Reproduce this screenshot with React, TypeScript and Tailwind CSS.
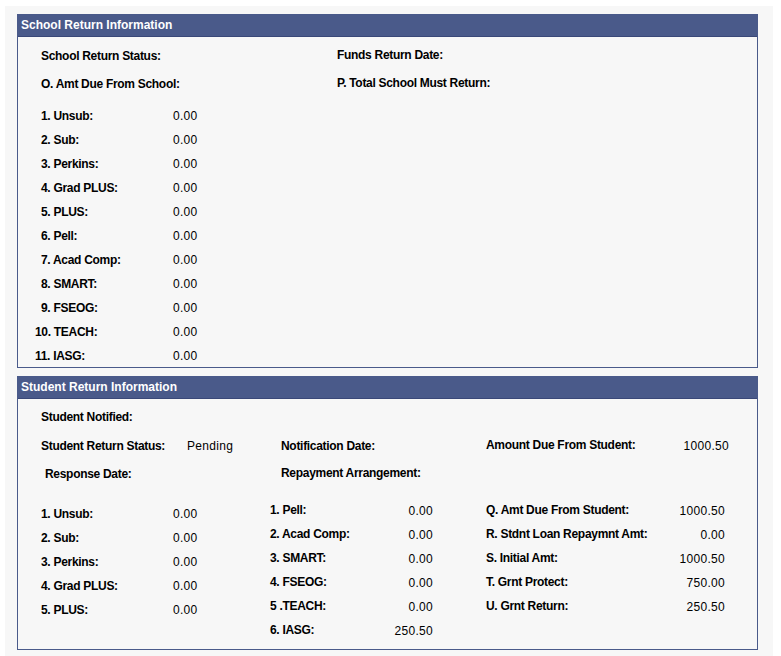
const font = { fontFamily: '"Liberation Sans", Arial, sans-serif' };

const schoolRows = [
  { label: "1. Unsub:", value: "0.00" },
  { label: "2. Sub:", value: "0.00" },
  { label: "3. Perkins:", value: "0.00" },
  { label: "4. Grad PLUS:", value: "0.00" },
  { label: "5. PLUS:", value: "0.00" },
  { label: "6. Pell:", value: "0.00" },
  { label: "7. Acad Comp:", value: "0.00" },
  { label: "8. SMART:", value: "0.00" },
  { label: "9. FSEOG:", value: "0.00" },
  { label: "10. TEACH:", value: "0.00", wide: true },
  { label: "11. IASG:", value: "0.00", wide: true },
];

const loanRows = [
  { label: "1. Unsub:", value: "0.00" },
  { label: "2. Sub:", value: "0.00" },
  { label: "3. Perkins:", value: "0.00" },
  { label: "4. Grad PLUS:", value: "0.00" },
  { label: "5. PLUS:", value: "0.00" },
];

const grantRows = [
  { label: "1. Pell:", value: "0.00" },
  { label: "2. Acad Comp:", value: "0.00" },
  { label: "3. SMART:", value: "0.00" },
  { label: "4. FSEOG:", value: "0.00" },
  { label: "5 .TEACH:", value: "0.00" },
  { label: "6. IASG:", value: "250.50" },
];

const totalRows = [
  { label: "Q. Amt Due From Student:", value: "1000.50" },
  { label: "R. Stdnt Loan Repaymnt Amt:", value: "0.00" },
  { label: "S. Initial Amt:", value: "1000.50" },
  { label: "T. Grnt Protect:", value: "750.00" },
  { label: "U. Grnt Return:", value: "250.50" },
];

function Label({ children }: { children: React.ReactNode }) {
  return (
    <span className="text-[12px] font-bold tracking-[-0.3px] text-black whitespace-nowrap">{children}</span>
  );
}

function Value({ children }: { children: React.ReactNode }) {
  return <span className="pt-[2px] text-[12px] tracking-[0.3px] text-black whitespace-nowrap">{children}</span>;
}

function Panel({ title, children }: { title: string; children: React.ReactNode }) {
  return (
    <section className="w-[741px] border border-[#4a5a8a] bg-[#f7f7f7]">
      <div className="h-[22px] border-b border-[#3a4878] bg-[#4a5a8a] pl-[3px] text-[12px] font-bold leading-[21px] text-white">
        {title}
      </div>
      {children}
    </section>
  );
}

export default function App() {
  return (
    <div className="min-h-screen bg-white pl-[5px] pt-[6px]" style={font}>
      <div className="min-h-[650px] w-[768px] bg-[#f7f7f7] pl-[12px] pt-[8px]">
        <Panel title="School Return Information">
          <div className="pl-[23px]">
            <div className="mt-[6px] flex h-[24px] items-center">
              <div className="w-[296px]">
                <Label>School Return Status:</Label>
              </div>
              <Label>Funds Return Date:</Label>
            </div>
            <div className="mt-[4px] flex h-[24px] items-center">
              <div className="w-[296px]">
                <Label>O. Amt Due From School:</Label>
              </div>
              <Label>P. Total School Must Return:</Label>
            </div>
            <div className="mt-[8px]">
              {schoolRows.map((r) => (
                <div key={r.label} className="flex h-[24px] items-center">
                  <div className={r.wide ? "-ml-[6px] w-[138px]" : "w-[132px]"}>
                    <Label>{r.label}</Label>
                  </div>
                  <Value>{r.value}</Value>
                </div>
              ))}
            </div>
          </div>
        </Panel>

        <div className="mt-[8px]">
          <Panel title="Student Return Information">
            <div className="pb-[7px] pl-[23px]">
              <div className="mt-[6px] flex h-[24px] items-center">
                <Label>Student Notified:</Label>
              </div>
              <div className="mt-[4px] flex h-[24px] items-center">
                <div className="w-[146px]">
                  <Label>Student Return Status:</Label>
                </div>
                <div className="w-[94px]">
                  <Value>Pending</Value>
                </div>
                <div className="w-[205px]">
                  <Label>Notification Date:</Label>
                </div>
                <div className="flex w-[243px] items-center justify-between">
                  <Label>Amount Due From Student:</Label>
                  <Value>1000.50</Value>
                </div>
              </div>
              <div className="mt-[4px] flex h-[24px] items-center">
                <div className="w-[240px] pl-[4px]">
                  <Label>Response Date:</Label>
                </div>
                <Label>Repayment Arrangement:</Label>
              </div>

              <div className="mt-[13px] flex">
                <div className="w-[229px] pt-[3px]">
                  {loanRows.map((r) => (
                    <div key={r.label} className="flex h-[24px] items-center">
                      <div className="w-[132px]">
                        <Label>{r.label}</Label>
                      </div>
                      <Value>{r.value}</Value>
                    </div>
                  ))}
                </div>
                <div className="w-[216px]">
                  {grantRows.map((r) => (
                    <div key={r.label} className="flex h-[24px] w-[163px] items-center justify-between">
                      <Label>{r.label}</Label>
                      <Value>{r.value}</Value>
                    </div>
                  ))}
                </div>
                <div className="w-[239px]">
                  {totalRows.map((r) => (
                    <div key={r.label} className="flex h-[24px] items-center justify-between">
                      <Label>{r.label}</Label>
                      <Value>{r.value}</Value>
                    </div>
                  ))}
                </div>
              </div>
            </div>
          </Panel>
        </div>
      </div>
    </div>
  );
}
